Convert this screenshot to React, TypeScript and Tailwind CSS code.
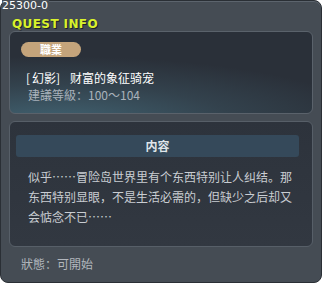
export default function App() {
  return (
    <div className="w-[322px] h-[284px] bg-white font-['Noto_Sans_CJK_SC',sans-serif]">
      <div className="relative w-[322px] h-[283px] rounded-[8px] bg-[#454c54] border border-[#2a2f35] shadow-[inset_0_1px_0_#5c646d] flex flex-col">
        {/* id tag sits over the frame corner */}
        <span className="absolute left-[1px] -top-[1px] text-[11px] leading-[12px] text-white font-['DejaVu_Sans',sans-serif] bg-[#454c54] pr-[1px]">
          25300-0
        </span>
        <div className="h-[30px] pl-[11px] pt-[8px]">
          <span className="text-[12px] leading-[12px] font-bold text-[#d9f22c] tracking-[0.4px] font-['DejaVu_Sans',sans-serif] [text-shadow:1px_1px_0_#1e2226]">
            QUEST INFO
          </span>
        </div>
        <div className="mx-[8px] h-[83px] rounded-[6px] border border-[#5a626b] bg-[radial-gradient(ellipse_130%_100%_at_15%_110%,#416271_0%,#33424d_45%,#2a3039_80%)] px-[11px] pt-[10px]">
          <div className="w-[60px] h-[15px] rounded-full bg-[#c4a47b] flex items-center justify-center text-[11px] font-bold text-white leading-none">
            職業
          </div>
          <div className="mt-[14px] text-[12px] leading-[14px] text-white pl-[5px]">
            <span className="inline-block w-[6px]">[</span>幻影<span className="inline-block w-[14px]">]</span>财富的象征骑宠
          </div>
          <div className="mt-[3px] text-[12px] leading-[14px] text-[#a9b2bb] pl-[7px]">建議等級：100～104</div>
        </div>
        <div className="mt-[7px] mx-[8px] h-[126px] rounded-[6px] border border-[#575f68] bg-gradient-to-b from-[#2d333c] to-[#323841] pt-[13px]">
          <div className="ml-[6px] mr-[13px] h-[22px] rounded-[3px] bg-[#35495a] flex items-center justify-center text-[12px] font-bold text-[#dfe5ea]">
            内容
          </div>
          <p className="mt-[10px] px-[18px] text-[12px] leading-[20px] text-[#c9cdd2]">
            似乎……冒险岛世界里有个东西特别让人纠结。那东西特别显眼，不是生活必需的，但缺少之后却又会惦念不已……
          </p>
        </div>
        <div className="mt-[10px] pl-[20px] text-[12px] leading-[14px] text-[#b2b7bd]">狀態：可開始</div>
      </div>
    </div>
  )
}
